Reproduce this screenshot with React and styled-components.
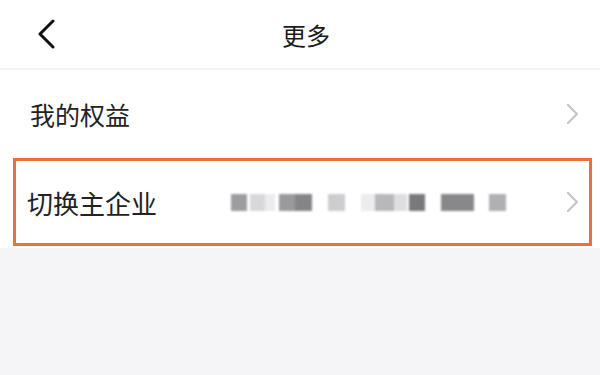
import React from 'react'
import styled, { createGlobalStyle } from 'styled-components'

const Global = createGlobalStyle`
  html, body {
    margin: 0;
    padding: 0;
    background: #f5f5f7;
    font-family: "Noto Sans CJK SC", "Noto Sans", sans-serif;
  }
`

const Page = styled.div`
  width: 600px;
  height: 375px;
  background: #f5f5f7;
  display: flex;
  flex-direction: column;
`

const Header = styled.header`
  height: 68px;
  background: #fff;
  display: flex;
  align-items: center;
  position: relative;
  border-bottom: 2px solid #f2f2f4;
`

const Back = styled.button`
  border: 0;
  background: none;
  padding: 0 0 0 36px;
  height: 100%;
  display: flex;
  align-items: center;
  position: absolute;
  left: 0;
  top: 0;
`

const Title = styled.h1`
  flex: 1;
  margin: 0;
  padding-left: 12px;
  text-align: center;
  font-size: 24px;
  font-weight: 400;
  color: #1a1a1a;
`

const List = styled.div`
  background: #fff;
  display: flex;
  flex-direction: column;
  padding-bottom: 2px;
`

const Row = styled.div`
  height: ${p => (p.$highlight ? '82px' : '88px')};
  display: flex;
  align-items: center;
  padding: ${p => (p.$highlight ? '0 9px 0 11px' : '0 20px 0 30px')};
  margin: ${p => (p.$highlight ? '0 8px 0 13px' : '0')};
  border: ${p => (p.$highlight ? '3px solid #ec6f3d' : '0')};
`

const Label = styled.span`
  font-size: ${p => p.$size || 25}px;
  color: #222;
  width: ${p => p.$w || 'auto'};
`

const Masked = styled.div`
  flex: 1;
  display: flex;
  align-items: center;
  height: 17px;
  filter: blur(0.8px);
`

const Block = styled.span`
  height: 17px;
  background: ${p => p.$c};
  flex-shrink: 0;
`

const Spacer = styled.div`
  flex: 1;
`

const Chevron = () => (
  <svg width="14" height="22" viewBox="0 0 14 22">
    <path d="M2 2 L11 11 L2 20" fill="none" stroke="#c6c6c9" strokeWidth="2.2" strokeLinecap="round" strokeLinejoin="round" />
  </svg>
)

// mosaic pieces: [gap before, width, colour]
const mosaic = [
  [0, 16, '#9d9d9f'],
  [3, 15, '#d8d8da'],
  [0, 10, '#ececee'],
  [4, 16, '#9a9a9c'],
  [0, 17, '#858587'],
  [16, 17, '#cdcdcf'],
  [16, 14, '#ececee'],
  [0, 19, '#b8b8ba'],
  [0, 13, '#dedee0'],
  [2, 16, '#79797b'],
  [16, 33, '#88888a'],
  [15, 17, '#b0b0b2'],
]

export default function App() {
  return (
    <Page>
      <Global />
      <Header>
        <Back aria-label="返回">
          <svg width="20" height="30" viewBox="0 0 20 30">
            <path d="M17 2 L4 15 L17 28" fill="none" stroke="#111" strokeWidth="3" strokeLinecap="round" strokeLinejoin="round" />
          </svg>
        </Back>
        <Title>更多</Title>
      </Header>
      <List>
        <Row>
          <Label>我的权益</Label>
          <Spacer />
          <Chevron />
        </Row>
        <Row $highlight>
          <Label $w="204px" $size={26}>切换主企业</Label>
          <Masked>
            {mosaic.map(([gap, w, c], i) => (
              <Block key={i} $c={c} style={{ width: w, marginLeft: gap }} />
            ))}
          </Masked>
          <Chevron />
        </Row>
      </List>
    </Page>
  )
}
